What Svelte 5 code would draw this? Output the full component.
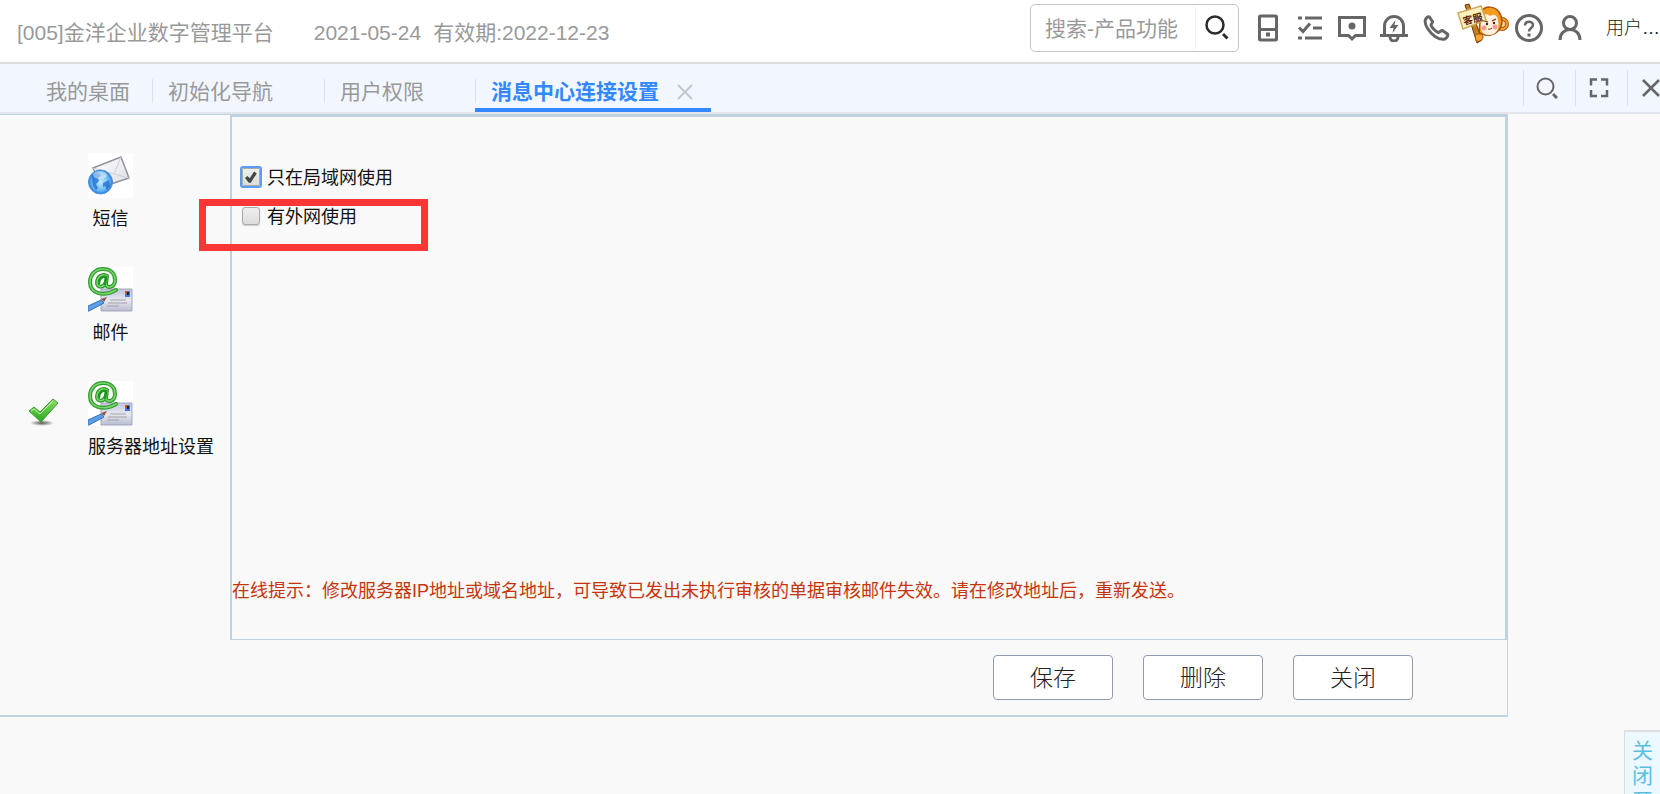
<script lang="ts">
  type Tab = { name: string; fixed?: boolean };
  type Channel = { name: string; icon: "sms" | "mail" };

  const tabs: Tab[] = [
    { name: "我的桌面", fixed: true },
    { name: "初始化导航" },
    { name: "用户权限" },
    { name: "消息中心连接设置" },
  ];
  const channels: Channel[] = [
    { name: "短信", icon: "sms" },
    { name: "邮件", icon: "mail" },
    { name: "服务器地址设置", icon: "mail" },
  ];

  let activeTab = $state(3);
  let activeChannel = $state(2);
  let lanOnly = $state(true);
  let wan = $state(false);
  let keyword = $state("");
</script>

<div class="page">
  <header class="header">
    <div class="title">
      <span>[005]金洋企业数字管理平台</span>
      <span class="dates"><span>2021-05-24</span><span>有效期:2022-12-23</span></span>
    </div>

    <form class="search" onsubmit={(e) => e.preventDefault()}>
      <input type="text" aria-label="搜索" placeholder="搜索-产品功能" bind:value={keyword} />
      <button type="submit" aria-label="搜索">
        <svg width="24" height="26" viewBox="0 0 24 26" fill="none" stroke="#2b2b2b" stroke-width="2.500">
          <circle cx="10" cy="10" r="8.500" />
          <path d="M18 19l4.500 4.500" stroke-width="3" />
        </svg>
      </button>
    </form>

    <nav class="tools">
      <button aria-label="终端">
        <svg viewBox="0 0 28 28" fill="none" stroke="#666" stroke-width="3">
          <rect x="5.500" y="2" width="17" height="24" rx="1" />
          <path d="M5 15.500h18" />
          <path d="M12 20.500h4" stroke-width="4" />
        </svg>
      </button>
      <button aria-label="待办">
        <svg viewBox="0 0 28 28" fill="none" stroke="#666" stroke-width="3">
          <path d="M2 4h4M9 4h17M17 14h9M2 24h4M9 24h17" />
          <path d="M3 13.500l4 4 7-8" />
        </svg>
      </button>
      <button aria-label="消息">
        <svg viewBox="0 0 28 28" fill="none" stroke="#666" stroke-width="3">
          <path d="M1.500 3.500h25v18h-9L14 25l-3.500-3.500h-9z" />
          <circle cx="14" cy="12" r="3.500" fill="#666" stroke="none" />
        </svg>
      </button>
      <button aria-label="提醒">
        <svg viewBox="0 0 28 28" fill="none" stroke="#666" stroke-width="3">
          <path d="M4.500 21V12a9.500 9.500 0 0 1 19 0v9M0 21.500h28" />
          <path d="M10 23a4 4 0 0 0 8 0" />
          <path d="M15.500 6l-6 8h4L12.500 19l6-8h-4z" fill="#666" stroke="none" />
        </svg>
      </button>
      <button aria-label="电话">
        <svg viewBox="0 0 28 28" fill="none" stroke="#666" stroke-width="3" stroke-linejoin="round">
          <path d="M3.500 5.500c1-2 2.500-3 4-2.500l3 4.500c.5 1-1.500 2.500-1.500 3.500 1 3 4.500 6.500 7.500 7.500 1.500 0 2.500-2.500 4-2l5 3.500c.8 1.500-.5 4-2.500 5-3 1-7-.5-10-2.500C8 19 1.500 10.500 3.500 5.500z" />
        </svg>
      </button>
      <button class="service" aria-label="客服">
        <svg width="52" height="42" viewBox="0 0 52 42">
          <circle cx="45" cy="22" r="5" fill="#fbd9a0" stroke="#a8560c" stroke-width="4" />
          <circle cx="45" cy="22" r="5" fill="none" stroke="#f7a52c" stroke-width="2" />
          <path d="M24 10c4-7 14-6 18 0 4 6 4 14-1 19-6 6-15 5-19 1z" fill="#f49a1c" stroke="#a8560c" stroke-width="1.500" />
          <path d="M25 16c2-4 5-5 8-2 4-3 8 0 8 5 2 8-2 14-9 14-8 0-10-7-7-17z" fill="#fff0df" />
          <path d="M27 19l4 1M35 19l4-2" stroke="#6a2c12" stroke-width="1.200" />
          <circle cx="30" cy="22" r="1.200" fill="#4a2010" />
          <circle cx="37" cy="21" r="1.200" fill="#4a2010" />
          <circle cx="27" cy="26" r="2.500" fill="#f99a8e" />
          <circle cx="38" cy="25" r="2.500" fill="#f99a8e" />
          <path d="M31 27q2 1 4-1" stroke="#8a3c1c" fill="none" />
          <path d="M8 3l4-1 13 36-5 3z" fill="#c8801e" stroke="#6a3808" />
          <path d="M18 33c4-2 8-1 8 2s-4 5-7 4z" fill="#f4a52c" stroke="#a8560c" />
          <path d="M1 11L24 4l5 14-23 9z" fill="#fbf0c0" stroke="#d0aa5c" stroke-width="1.500" />
          <text x="7" y="23" class="sign" transform="rotate(-15 7 23)">客服</text>
        </svg>
      </button>
      <button aria-label="帮助">
        <svg viewBox="0 0 28 28" fill="none" stroke="#666" stroke-width="3">
          <circle cx="14" cy="14" r="12.500" />
          <path d="M10 11.500c0-5 8-5 8-.5 0 3-4 3-4 6.500" stroke-width="2.500" />
          <path d="M14 19.500v3" />
        </svg>
      </button>
      <button aria-label="用户">
        <svg viewBox="0 0 28 28" fill="none" stroke="#666" stroke-width="3">
          <circle cx="13" cy="9" r="6.500" />
          <path d="M3 26c0-14 20-14 20 0" />
        </svg>
      </button>
      <a class="user" href="#user">用户…</a>
    </nav>
  </header>

  <div class="tabbar">
    <div class="tabs">
      {#each tabs as tab, i}
        <div class="tab" class:active={i === activeTab} class:fixed={tab.fixed}>
          <button class="tab-name" onclick={() => (activeTab = i)}>{tab.name}</button>
          {#if i === activeTab && !tab.fixed}
            <button class="tab-close" aria-label="关闭标签">
              <svg width="16" height="16" viewBox="0 0 16 16" stroke="#c3c6cb" stroke-width="2">
                <path d="M1 1l14 14M15 1L1 15" />
              </svg>
            </button>
          {/if}
        </div>
      {/each}
    </div>
    <div class="actions">
      <button aria-label="查找">
        <svg viewBox="0 0 22 22" fill="none" stroke="#666" stroke-width="2">
          <circle cx="9.500" cy="9.500" r="8" />
          <path d="M17 17l4 4" stroke-width="3" />
        </svg>
      </button>
      <button aria-label="全屏">
        <svg viewBox="0 0 22 22" fill="none" stroke="#666" stroke-width="2.500">
          <path d="M3 8.500V2.500h6M13 2.500h6v6M19 13v6h-6M9 19H3v-6" />
        </svg>
      </button>
      <button aria-label="关闭">
        <svg viewBox="0 0 22 22" fill="none" stroke="#666" stroke-width="2.500">
          <path d="M3 3l16 16M19 3L3 19" />
        </svg>
      </button>
    </div>
  </div>

  <main class="window">
    <div class="body">
      <aside class="channels">
        {#each channels as channel, i}
          <div class="channel">
            <span class="mark">
              {#if i === activeChannel}
                <svg width="32" height="28" viewBox="0 0 32 28">
                  <defs>
                    <linearGradient id="tick" x1="0" y1="0" x2="0" y2="1">
                      <stop offset="0" stop-color="#8ee06a" />
                      <stop offset="1" stop-color="#22a81c" />
                    </linearGradient>
                    <radialGradient id="shade">
                      <stop offset="0" stop-color="#555" />
                      <stop offset="1" stop-color="#555" stop-opacity="0" />
                    </radialGradient>
                  </defs>
                  <ellipse cx="14" cy="25" rx="12" ry="3" fill="url(#shade)" />
                  <path d="M1 13l5-4 6 5L25 1l5 4L13 24z" fill="url(#tick)" stroke="#3c9c30" stroke-linejoin="round" />
                  <path d="M3 13l3-2 6 5L25 3" fill="none" stroke="#c6f3b0" />
                </svg>
              {/if}
            </span>
            <button onclick={() => (activeChannel = i)}>
              {#if channel.icon === "sms"}
                <svg width="45" height="45" viewBox="0 0 45 45">
                  <defs>
                    <radialGradient id="globe" cx=".5" cy=".5">
                      <stop offset="0" stop-color="#c4ecff" />
                      <stop offset=".7" stop-color="#6cbcf6" />
                      <stop offset="1" stop-color="#2a7cdc" />
                    </radialGradient>
                    <linearGradient id="paper" x1="0" y1="0" x2="1" y2="1">
                      <stop offset="0" stop-color="#fff" />
                      <stop offset="1" stop-color="#dcdce8" />
                    </linearGradient>
                  </defs>
                  <rect width="45" height="45" fill="#fff" />
                  <path d="M5 15L33 4l8 21-27 9z" fill="url(#paper)" stroke="#92929e" stroke-width="1.500" />
                  <path d="M5 15l21 6L33 4M26 21l15 4" fill="none" stroke="#d0d0da" />
                  <circle cx="12.500" cy="29" r="12" fill="url(#globe)" stroke="#4a90dc" />
                  <path d="M4 22c4-3 9-2 9 1l-3 2 1 3-3 3 2 4-2 2-3-4-1-6zM15 30l6-3 1 6-3 4-2-4-2 1z" fill="#1d69cc" opacity=".75" />
                  <ellipse cx="12" cy="22" rx="7" ry="4" fill="#fff" opacity=".45" />
                </svg>
              {:else}
                <svg width="45" height="45" viewBox="0 0 45 45">
                  <defs>
                    <linearGradient id="card" x1="0" y1="0" x2="0" y2="1">
                      <stop offset="0" stop-color="#bfc3e0" />
                      <stop offset=".5" stop-color="#e8e8f0" />
                      <stop offset="1" stop-color="#b8bcd0" />
                    </linearGradient>
                  </defs>
                  <rect width="45" height="45" fill="#fff" />
                  <path d="M13 22h31v22H13z" fill="url(#card)" stroke="#a2a6bc" />
                  <path d="M37 24h5v6h-5z" fill="#4a78d8" />
                  <path d="M37 24h3v3h-3z" fill="#b8592c" />
                  <path d="M39 25h2v3h-2z" fill="#222" />
                  <path d="M22 33h16M20 36h19M19 39h12" stroke="#a2a2a8" />
                  <path d="M0 39l13-6 3 3L1 44H0z" fill="#5a9fe8" stroke="#3a72b8" />
                  <path d="M13 32l6-2-3 5z" fill="#8c5444" />
                  <g fill="none" stroke-linecap="round">
                    <path d="M19 9c-5-3-10 1-10 7 0 5 7 5 9-1l1-6-1 8c0 5 9 4 9-4C27 5 21 2 15 2 7 2 2 8 2 15c0 12 14 15 26 8" stroke="#2f9a2c" stroke-width="4" />
                    <path d="M19 9c-5-3-10 1-10 7 0 5 7 5 9-1l1-6-1 8c0 5 9 4 9-4C27 5 21 2 15 2 7 2 2 8 2 15c0 12 14 15 26 8" stroke="#7bd870" stroke-width="1.500" />
                    <path d="M11 16c0-4 3-7 7-6M18 11l-1 6" stroke="#1c961c" stroke-width="2.500" />
                  </g>
                </svg>
              {/if}
              <span>{channel.name}</span>
            </button>
          </div>
        {/each}
      </aside>

      <section class="panel">
        <div class="options">
          <label><input type="checkbox" class="focused" bind:checked={lanOnly} />只在局域网使用</label>
          <label><input type="checkbox" bind:checked={wan} />有外网使用</label>
          <div class="highlight"></div>
        </div>
        <p class="notice">
          在线提示：修改服务器IP地址或域名地址，可导致已发出未执行审核的单据审核邮件失效。请在修改地址后，重新发送。
        </p>
      </section>
    </div>

    <footer class="buttons">
      <button>保存</button>
      <button>删除</button>
      <button>关闭</button>
    </footer>
  </main>

  <button class="side-close">关闭开</button>
</div>

<style>
  :global(body) {
    background: #f9f9f9;
  }

  .page {
    position: relative;
    min-height: 100vh;
    overflow: hidden;
    font-family: "Liberation Sans", "Noto Sans CJK SC", sans-serif;
    font-size: 18px;
    line-height: 26px;
    color: #111;
  }

  button {
    padding: 0;
    border: 0;
    background: none;
    font: inherit;
    color: inherit;
    cursor: pointer;
  }

  svg {
    display: block;
  }

  .header {
    display: flex;
    height: 62px;
    border-bottom: 2px solid #ddd;
    background: #fff;
  }

  .title {
    display: flex;
    flex: 1;
    align-items: center;
    gap: 40px;
    padding: 4px 0 0 17px;
    font-size: 21px;
    color: #999;
    white-space: nowrap;
  }

  .dates {
    display: flex;
    gap: 12px;
  }

  .search {
    display: flex;
    box-sizing: border-box;
    width: 209px;
    height: 48px;
    margin-top: 4px;
    border: 1px solid #c6c6c6;
    border-radius: 5px;
  }

  .search input {
    flex: 1;
    min-width: 0;
    padding: 2px 0 0 14px;
    border: 0;
    border-right: 1px solid #f2f2f2;
    border-radius: 5px;
    outline: 0;
    background: transparent;
    font: inherit;
    font-size: 21px;
  }

  .search input::placeholder {
    color: #999;
  }

  .search button {
    display: flex;
    align-items: center;
    justify-content: center;
    width: 42px;
  }

  .tools {
    display: flex;
    align-items: center;
    gap: 14px;
    height: 56px;
    padding-left: 15px;
  }

  .tools button svg {
    width: 28px;
    height: 28px;
  }

  .tools .service {
    align-self: flex-start;
    margin: 2px -8px 0 -7px;
  }

  .tools .service svg {
    width: 52px;
    height: 42px;
  }

  .sign {
    font-size: 10px;
    font-weight: 700;
    fill: #5a2a10;
  }

  .user {
    width: 54px;
    margin-left: 7px;
    font-weight: 300;
    color: #222;
    text-decoration: none;
    white-space: nowrap;
  }

  .tabbar {
    display: flex;
    justify-content: space-between;
    height: 48px;
    border-bottom: 2px solid #e2e5ec;
    background: #f1f6ff;
  }

  .tabs {
    display: flex;
    padding-left: 30px;
    font-size: 21px;
    color: #999;
  }

  .tab {
    position: relative;
    display: flex;
    align-items: center;
    padding: 8px 51px 0 16px;
  }

  .tab.fixed {
    padding-right: 22px;
  }

  .tab + .tab::before {
    content: "";
    position: absolute;
    top: 15px;
    left: 0;
    width: 1px;
    height: 24px;
    background: #dde1ea;
  }

  .tab.active {
    padding-right: 18px;
    border-bottom: 4px solid #3388ff;
    padding-top: 12px;
    color: #3388ff;
  }

  .tab.active .tab-name {
    font-weight: 700;
  }

  .tab-close {
    margin-left: 18px;
  }

  .actions {
    display: flex;
    align-items: center;
  }

  .actions button {
    display: flex;
    align-items: center;
    height: 36px;
    padding: 0 17px 0 12px;
    border-left: 1px solid #dde1ea;
  }

  .actions button:last-child {
    width: 33px;
    box-sizing: border-box;
    padding-right: 0;
  }

  .actions svg {
    flex: none;
    width: 22px;
    height: 22px;
  }

  .window {
    margin-right: 152px;
    border: solid #c0d2e0;
    border-width: 1px 1px 2px 0;
  }

  .body {
    display: flex;
  }

  .channels {
    width: 230px;
    padding-top: 38px;
  }

  .channel {
    display: grid;
    grid-template-columns: 88px 1fr;
    justify-items: start;
    height: 114px;
  }

  .mark {
    padding: 17px 0 0 28px;
  }

  .channel button {
    display: flex;
    flex-direction: column;
    align-items: flex-start;
    align-self: start;
    gap: 8px;
  }

  .channel button span {
    min-width: 45px;
    text-align: center;
    white-space: nowrap;
  }

  .panel {
    display: flex;
    flex: 1;
    flex-direction: column;
    justify-content: space-between;
    box-sizing: border-box;
    min-height: 525px;
    border: 2px solid #c0d2e0;
    border-bottom-width: 1px;
  }

  .options {
    position: relative;
    display: flex;
    flex-direction: column;
    align-items: flex-start;
    gap: 13px;
    padding: 48px 0 0 10px;
  }

  .options label {
    display: flex;
    align-items: center;
    gap: 7px;
  }

  .options input {
    position: relative;
    box-sizing: border-box;
    appearance: none;
    width: 18px;
    height: 18px;
    margin: 0 0 2px;
    border: 1px solid #aaa;
    border-radius: 3px;
    background: linear-gradient(#eee, #dcdcdc);
    box-shadow: 0 1px 1px #ccc;
  }

  .options .focused {
    border-radius: 1px;
    outline: 2px solid #5c9bf8;
  }

  .options input:checked::before {
    content: "";
    position: absolute;
    inset: 2px;
    background: #444;
    clip-path: polygon(0 58%, 20% 42%, 40% 60%, 76% 4%, 98% 20%, 48% 98%, 32% 98%);
  }

  .highlight {
    position: absolute;
    top: 82px;
    left: -33px;
    box-sizing: border-box;
    width: 229px;
    height: 52px;
    border: 7px solid #fb3636;
    pointer-events: none;
  }

  .notice {
    margin: 0 0 35px;
    color: #c5350c;
  }

  .buttons {
    display: flex;
    justify-content: flex-end;
    gap: 30px;
    padding: 15px 94px;
  }

  .buttons button {
    width: 120px;
    height: 45px;
    border: 1px solid #8e9bb0;
    border-radius: 4px;
    background: #fff;
    font-size: 23px;
    font-weight: 300;
    color: #222;
  }

  .side-close {
    position: absolute;
    top: calc(100% - 64px);
    right: 0;
    width: 36px;
    padding: 6px;
    border: solid #ddd;
    border-width: 2px 0 0 1px;
    background: #ebf8ff;
    font-size: 21px;
    line-height: 25px;
    color: #5bc0de;
  }
</style>
